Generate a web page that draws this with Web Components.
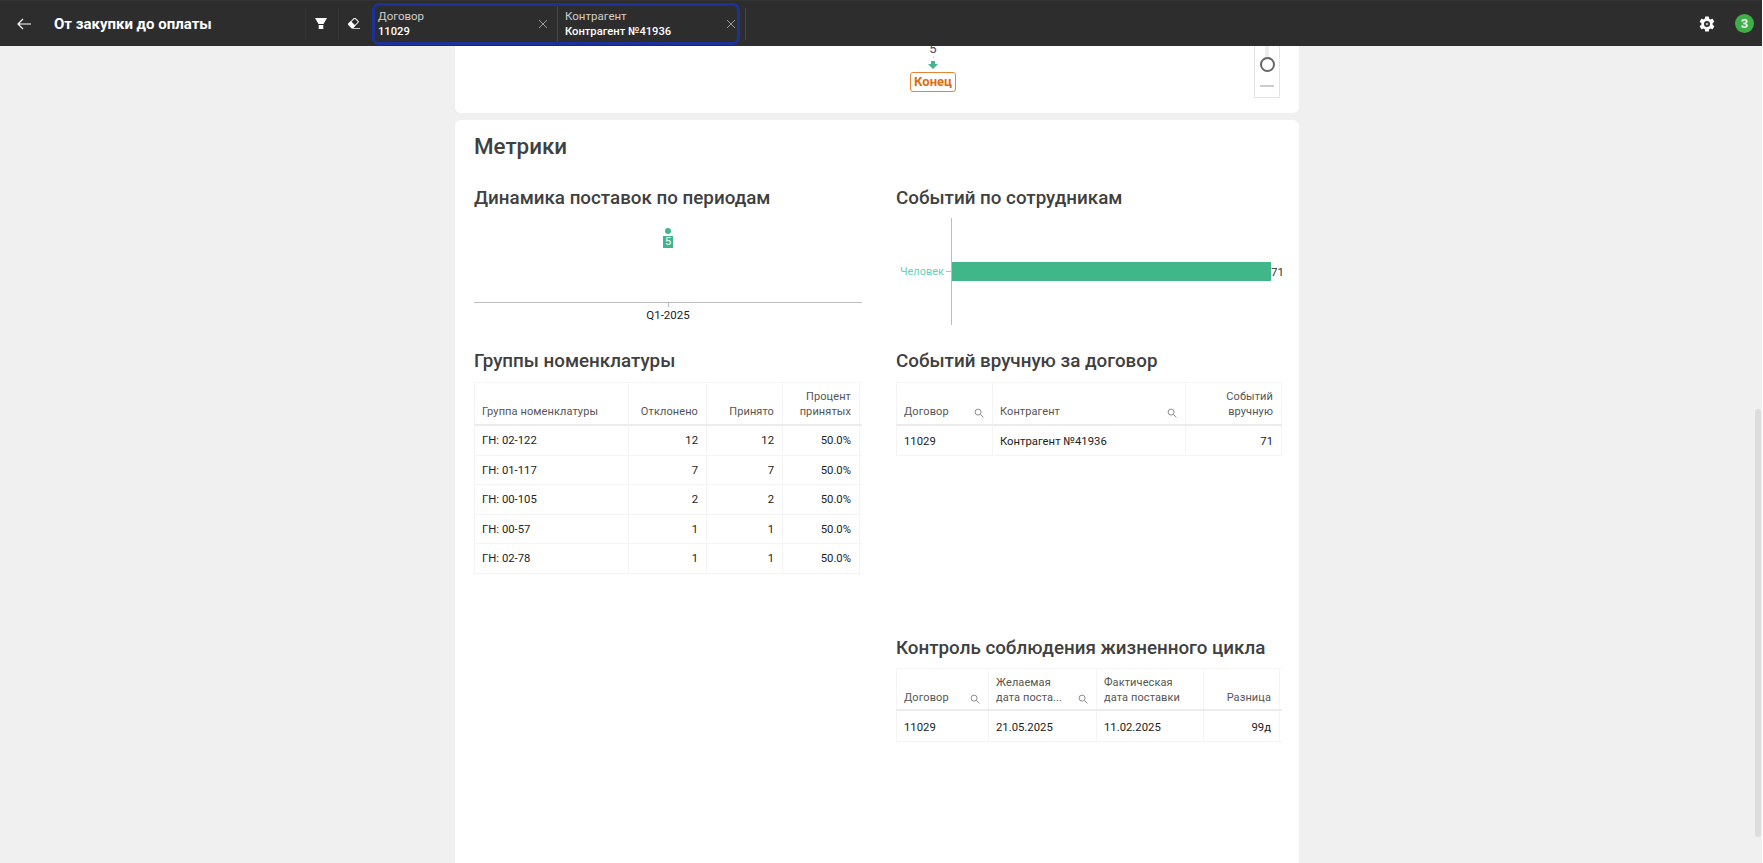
<!DOCTYPE html>
<html lang="ru">
<head>
<meta charset="utf-8">
<title>От закупки до оплаты</title>
<style>
    html, body { margin: 0; height: 100%; overflow: hidden; background: #f0f0f0; }
    body { font-family: Roboto, "Liberation Sans", sans-serif; }
</style>
</head>
<body>
<app-page>
    <top-bar slot="bar" heading="От закупки до оплаты"></top-bar>
    <flow-card></flow-card>
    <metrics-card></metrics-card>
</app-page>

<script>
const searchIcon = `<svg width="10" height="10" viewBox="0 0 10 10" fill="none" stroke="#8c8c8c" stroke-width="1"><circle cx="4.1" cy="4.1" r="3"/><path d="M6.4 6.4 9.4 9.4"/></svg>`;

class AppPage extends HTMLElement{
    constructor(){
        super();
        this.attachShadow({mode: "open"}).innerHTML = `
        <style>
            :host{ display: flex; flex-direction: column; height: 863px; overflow: hidden; position: relative; box-sizing: border-box; border-right: 1px solid #fff; }
            main{ display: flex; flex-direction: column; align-items: center; gap: 7px; flex: 1; overflow: hidden; padding-right: 8px; }
            .scroll{ position: absolute; left: 1755px; top: 409px; width: 6px; height: 428px; border-radius: 3px; background: #dcdcdc; }
        </style>
        <slot name="bar"></slot>
        <main><slot></slot></main>
        <div class="scroll"></div>`;
    }
}

class FilterChip extends HTMLElement{
    constructor(){
        super();
        this.attachShadow({mode: "open"}).innerHTML = `
        <style>
            :host{ display: flex; align-items: center; justify-content: space-between; box-sizing: border-box; height: 100%; color: #fff; }
            .label{ font-size: 11.5px; line-height: 15px; color: #cfcfcf; }
            .value{ font-size: 11.2px; line-height: 15px; font-weight: 500; }
            svg{ display: block; }
        </style>
        <div>
            <div class="label"></div>
            <div class="value"></div>
        </div>
        <svg width="10" height="10" viewBox="0 0 10 10" fill="none" stroke="#9a9a9a" stroke-width="1"><path d="M1 1 9 9M9 1 1 9"/></svg>`;
    }
    connectedCallback(){
        this.shadowRoot.querySelector(".label").textContent = this.getAttribute("label");
        this.shadowRoot.querySelector(".value").textContent = this.getAttribute("value");
    }
}

class TopBar extends HTMLElement{
    constructor(){
        super();
        this.attachShadow({mode: "open"}).innerHTML = `
        <style>
            :host{ display: flex; align-items: center; height: 46px; flex: none; background: #2d2d2d; color: #fff; border-top: 1px solid #333; box-sizing: border-box; }
            .back{ width: 16px; margin-left: 16px; flex: none; display: flex; }
            h1{ margin: 0 0 0 22px; width: 251px; flex: none; font-size: 15px; font-weight: 700; white-space: nowrap; }
            .tool{ width: 33px; height: 32px; flex: none; display: flex; align-items: center; justify-content: center; border-left: 1px solid #363636; box-sizing: border-box; padding-right: 3px; }
            .chips{ box-sizing: border-box; width: 368px; height: 42px; flex: none; margin-left: 1px; border: 3px solid #1c3199; border-radius: 7px; display: grid; grid-template-columns: 182px 1fr; align-items: stretch; }
            .one{ padding: 0 9px 0 3px; }
            .two{ padding: 0 1px 0 7px; border-left: 1px solid #444; }
            .sep{ width: 1px; height: 32px; background: #444; margin-left: 5px; flex: none; }
            .right{ margin-left: auto; display: flex; align-items: center; gap: 19px; margin-right: 8px; }
            .badge{ width: 19px; height: 19px; border-radius: 50%; background: #3fae49; color: #e8f3e8; font-size: 13px; font-weight: 700; display: flex; align-items: center; justify-content: center; }
            svg{ display: block; }
        </style>
        <span class="back"><svg width="16" height="16" viewBox="0 0 16 16" fill="none" stroke="#fff" stroke-width="1.2"><path d="M15 8H2M7 3 2 8l5 5"/></svg></span>
        <h1></h1>
        <div class="tool"><svg width="12" height="11" viewBox="0 0 12 11" fill="#fff"><path d="M0 0H12L8.500 6H3.500z"/><path d="M3.700 7H8.300V11H3.700z"/></svg></div>
        <div class="tool"><svg width="13" height="11" viewBox="0 0 13 11"><g transform="rotate(-45 6.500 5)"><rect x="2" y="2.200" width="9" height="5.600" rx="1" fill="none" stroke="#fff"/><rect x="1.500" y="1.700" width="4.500" height="6.600" rx="1" fill="#fff"/></g><path d="M6 10.500h7" stroke="#c8c8c8"/></svg></div>
        <div class="chips">
            <filter-chip class="one" label="Договор" value="11029"></filter-chip>
            <filter-chip class="two" label="Контрагент" value="Контрагент №41936"></filter-chip>
        </div>
        <div class="sep"></div>
        <div class="right">
            <svg width="18" height="18" viewBox="0 0 24 24" fill="#fff"><path fill-rule="evenodd" d="M19.400 13c.04-.33.1-.66.1-1s-.06-.67-.1-1l2.100-1.650c.2-.15.240-.42.120-.64l-2-3.460c-.12-.22-.39-.3-.61-.22l-2.490 1c-.52-.4-1.080-.73-1.690-.98l-.38-2.650A.5.500 0 0 0 14 2h-4a.5.500 0 0 0-.5.420l-.38 2.650c-.61.25-1.170.59-1.690.98l-2.490-1c-.23-.09-.49 0-.61.22l-2 3.460c-.13.22-.07.49.12.64L4.570 11c-.04.33-.07.66-.07 1s.03.67.07 1l-2.110 1.650c-.19.150-.240.420-.120.640l2 3.460c.12.220.39.300.61.220l2.490-1c.52.400 1.080.730 1.690.980l.38 2.650c.03.240.240.420.49.420h4c.25 0 .46-.180.49-.420l.38-2.650c.61-.250 1.170-.590 1.690-.980l2.490 1c.23.090.490 0 .610-.220l2-3.460c.120-.220.070-.490-.120-.640zM12 16a4 4 0 1 1 0-8 4 4 0 0 1 0 8z"/><circle cx="12" cy="12" r="1.800" fill="#b5b5b5"/></svg>
            <span class="badge">3</span>
        </div>`;
    }
    connectedCallback(){
        this.shadowRoot.querySelector("h1").textContent = this.getAttribute("heading");
    }
}

class FlowCard extends HTMLElement{
    constructor(){
        super();
        this.attachShadow({mode: "open"}).innerHTML = `
        <style>
            :host{ display: block; width: 844px; height: 67px; flex: none; background: #fff; border-radius: 0 0 6px 6px; position: relative; overflow: hidden; }
            .flow{ display: flex; flex-direction: column; align-items: center; box-sizing: border-box; width: 100%; padding-left: 112px; }
            .count{ font-size: 13px; line-height: 14px; height: 14px; color: #3c4a6b; margin-top: -4px; }
            .dash{ width: 1px; height: 2px; background: #bfe6d6; }
            .arrow{ margin-top: 3px; display: block; }
            .end{ box-sizing: border-box; height: 20px; width: 46px; margin-top: 3px; border: 1px solid #e38535; border-radius: 3px; color: #dc6d13; font-size: 13px; font-weight: 700; line-height: 18px; text-align: center; }
            .zoom{ position: absolute; left: 799px; top: 0; width: 26px; height: 52px; box-sizing: border-box; border: 1px solid #e4e4e4; border-top: 0; display: flex; flex-direction: column; align-items: center; }
            .track{ width: 4px; height: 11px; background: #eee; }
            .knob{ box-sizing: border-box; width: 15px; height: 15px; border: 2px solid #666; border-radius: 50%; background: #fff; }
            .minus{ width: 14px; height: 2px; background: #ccc; margin-top: 13px; }
        </style>
        <div class="flow">
            <div class="count">5</div>
            <div class="dash"></div>
            <svg class="arrow" width="10" height="8" viewBox="0 0 10 8" fill="#40b68a"><path d="M3 0h4v3h3L5 8 0 3h3z"/></svg>
            <div class="end">Конец</div>
        </div>
        <div class="zoom"><div class="track"></div><div class="knob"></div><div class="minus"></div></div>`;
    }
}

class MetricCell extends HTMLElement{
    constructor(){
        super();
        this.attachShadow({mode: "open"}).innerHTML = `
        <style>
            :host{ display: block; }
            h3{ margin: 0; font-size: 18.8px; line-height: 24px; font-weight: 500; color: #404040; white-space: nowrap; }
        </style>
        <h3></h3>
        <slot></slot>`;
    }
    connectedCallback(){
        this.shadowRoot.querySelector("h3").textContent = this.getAttribute("heading");
    }
}

class PeriodChart extends HTMLElement{
    constructor(){
        super();
        this.attachShadow({mode: "open"}).innerHTML = `
        <style>
            :host{ display: block; position: relative; height: 107px; margin-top: 8px; font-size: 11.5px; color: #222; }
            .line{ position: absolute; left: 0; right: 0; top: 84px; height: 1px; background: #bdbdbd; }
            .tick{ position: absolute; left: 194px; top: 84px; width: 1px; height: 5px; background: #bdbdbd; }
            .label{ position: absolute; left: 0; right: 0; top: 90px; text-align: center; line-height: 14px; }
            .dot{ position: absolute; left: 191px; top: 10px; width: 6px; height: 6px; border-radius: 50%; background: #40b68a; }
            .val{ position: absolute; left: 189px; top: 18px; width: 10px; height: 12px; background: #40b68a; color: #fff; font-size: 11px; line-height: 12px; text-align: center; }
        </style>
        <div class="dot"></div>
        <div class="val">5</div>
        <div class="line"></div>
        <div class="tick"></div>
        <div class="label">Q1-2025</div>`;
    }
}

class PeopleChart extends HTMLElement{
    constructor(){
        super();
        this.attachShadow({mode: "open"}).innerHTML = `
        <style>
            :host{ display: flex; align-items: center; height: 107px; margin-top: 8px; font-size: 11px; }
            .name{ width: 48px; flex: none; text-align: right; color: #5fd3c0; }
            .tick{ width: 5px; height: 1px; margin-left: 2px; flex: none; background: #bdbdbd; }
            .plot{ flex: none; height: 107px; border-left: 1px solid #bdbdbd; display: flex; align-items: center; }
            .bar{ width: 319px; height: 19px; background: #40b68a; }
            .num{ color: #333; font-size: 11.5px; }
        </style>
        <span class="name">Человек</span>
        <span class="tick"></span>
        <div class="plot"><div class="bar"></div><span class="num">71</span></div>`;
    }
}

class DataTable extends HTMLElement{
    constructor(){
        super();
        this.attachShadow({mode: "open"});
    }
    set data(data){
        this._data = data;
        this.render();
    }
    render(){
        const {widths, head, rows, rowHeight, rowPad, headHeight, headPad, top} = this._data;
        const cols = widths.map(w => w + "px").join(" ");
        this.shadowRoot.innerHTML = `
        <style>
            :host{ display: block; margin-top: ${top}px; font-size: 11.3px; color: #222; }
            .row{ display: grid; grid-template-columns: ${cols}; border-bottom: 1px solid #f4f4f4; box-sizing: border-box; }
            .head{ height: ${headHeight}px; color: #555; font-size: 11px; letter-spacing: .1px; line-height: 15px; border-top: 1px solid #f6f6f6; border-bottom: 2px solid #ececec; }
            .body{ height: ${rowHeight}px; }
            .cell{ box-sizing: border-box; padding: 0 8px 0 7px; border-left: 1px solid #f4f4f4; display: flex; align-items: center; white-space: nowrap; }
            .body .cell{ padding-top: ${rowPad}px; }
            .cell:last-child{ border-right: 1px solid #f4f4f4; }
            .head .cell{ align-items: flex-end; padding-bottom: ${headPad}px; justify-content: space-between; gap: 4px; white-space: pre-line; }
            .right{ justify-content: flex-end; text-align: right; }
            .head .right{ justify-content: flex-end; }
            svg{ flex: none; margin-bottom: 1px; }
        </style>`;
        const headRow = document.createElement("div");
        headRow.className = "row head";
        head.forEach(col => {
            const cell = document.createElement("div");
            cell.className = "cell" + (col.right ? " right" : "");
            const text = document.createElement("span");
            text.textContent = col.text;
            cell.appendChild(text);
            if(col.search) cell.insertAdjacentHTML("beforeend", searchIcon);
            headRow.appendChild(cell);
        });
        this.shadowRoot.appendChild(headRow);
        rows.forEach(row => {
            const rowEl = document.createElement("div");
            rowEl.className = "row body";
            row.forEach((value, i) => {
                const cell = document.createElement("div");
                cell.className = "cell" + (head[i].right ? " right" : "");
                cell.textContent = value;
                rowEl.appendChild(cell);
            });
            this.shadowRoot.appendChild(rowEl);
        });
    }
}

class MetricsCard extends HTMLElement{
    constructor(){
        super();
        this.attachShadow({mode: "open"}).innerHTML = `
        <style>
            :host{ display: block; width: 844px; flex: 1; box-sizing: border-box; padding: 12px 17px 0 19px; background: #fff; border-radius: 6px 6px 0 0; }
            h2{ margin: 0; font-size: 22.4px; line-height: 29px; font-weight: 500; color: #404040; }
            .grid{ display: grid; grid-template-columns: 388px 386px; column-gap: 34px; margin-top: 25px; }
            .top{ height: 163px; }
            .middle{ height: 287px; }
        </style>
        <h2>Метрики</h2>
        <div class="grid">
            <metric-cell class="top" heading="Динамика поставок по периодам"><period-chart></period-chart></metric-cell>
            <metric-cell class="top" heading="Событий по сотрудникам"><people-chart></people-chart></metric-cell>
            <metric-cell class="middle" heading="Группы номенклатуры"><data-table id="groups"></data-table></metric-cell>
            <metric-cell class="middle" heading="Событий вручную за договор"><data-table id="manual"></data-table></metric-cell>
            <div></div>
            <metric-cell heading="Контроль соблюдения жизненного цикла"><data-table id="cycle"></data-table></metric-cell>
        </div>`;
    }
    connectedCallback(){
        const root = this.shadowRoot;
        root.getElementById("groups").data = {
            widths: [154, 78, 76, 78], top: 9, headHeight: 44, headPad: 5, rowHeight: 29.5, rowPad: 1,
            head: [{text: "Группа номенклатуры"}, {text: "Отклонено", right: true}, {text: "Принято", right: true}, {text: "Процент\nпринятых", right: true}],
            rows: [
                ["ГН: 02-122", "12", "12", "50.0%"],
                ["ГН: 01-117", "7", "7", "50.0%"],
                ["ГН: 00-105", "2", "2", "50.0%"],
                ["ГН: 00-57", "1", "1", "50.0%"],
                ["ГН: 02-78", "1", "1", "50.0%"]
            ]
        };
        root.getElementById("manual").data = {
            widths: [96, 193, 97], top: 9, headHeight: 44, headPad: 5, rowHeight: 30, rowPad: 1,
            head: [{text: "Договор", search: true}, {text: "Контрагент", search: true}, {text: "Событий\nвручную", right: true}],
            rows: [["11029", "Контрагент №41936", "71"]]
        };
        root.getElementById("cycle").data = {
            widths: [92, 108, 107, 77], top: 8, headHeight: 43, headPad: 4, rowHeight: 31, rowPad: 2,
            head: [{text: "Договор", search: true}, {text: "Желаемая\nдата поста...", search: true}, {text: "Фактическая\nдата поставки"}, {text: "Разница", right: true}],
            rows: [["11029", "21.05.2025", "11.02.2025", "99д"]]
        };
    }
}

customElements.define("app-page", AppPage);
customElements.define("filter-chip", FilterChip);
customElements.define("top-bar", TopBar);
customElements.define("flow-card", FlowCard);
customElements.define("metric-cell", MetricCell);
customElements.define("period-chart", PeriodChart);
customElements.define("people-chart", PeopleChart);
customElements.define("data-table", DataTable);
customElements.define("metrics-card", MetricsCard);
</script>
</body>
</html>
